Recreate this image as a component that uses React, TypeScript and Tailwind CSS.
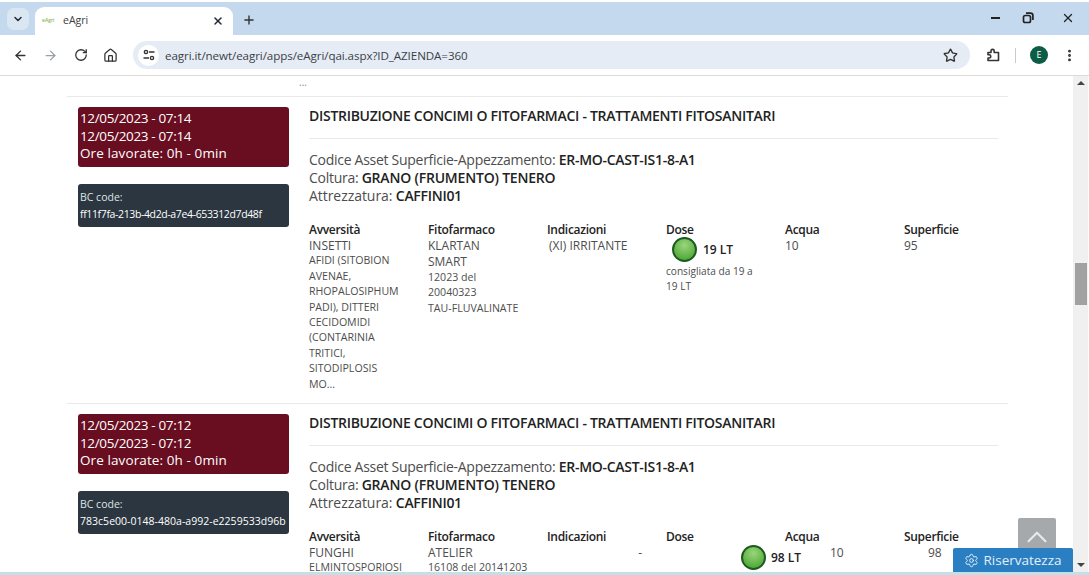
import { ArrowLeft, ArrowRight, ChevronDown, ChevronUp, Home, MoreVertical, Plus, RotateCw, Settings, Star, X } from 'lucide-react';

const font = { fontFamily: '"Open Sans", "Noto Sans", sans-serif' };

function GreenDot() {
  return (
    <span className="inline-block h-[25px] w-[25px] shrink-0 rounded-full border-2 border-[#1c5a20] bg-[radial-gradient(circle_at_50%_30%,#9ad67c,#55ab3c_75%)]" />
  );
}

function Head({ children }: { children: React.ReactNode }) {
  return <div className="text-[12px] leading-[15px] font-semibold tracking-[-0.3px] text-[#222]">{children}</div>;
}

function Record({ stamp, bc, bcClass, children }: { stamp: string; bc: string; bcClass: string; children: React.ReactNode }) {
  return (
    <div className="flex border-b border-[#e8eaea]">
      <div className="w-[242px] shrink-0 pl-[11px] pt-[10px]">
        <div className="h-[60px] w-[211px] rounded-[3px] bg-[#690d20] px-[2px] pt-[3px] text-[13.5px] leading-[17.5px] text-white">
          <div className="tracking-[-0.35px]">{stamp}</div>
          <div className="tracking-[-0.35px]">{stamp}</div>
          <div className="tracking-[0.1px]">Ore lavorate: 0h - 0min</div>
        </div>
        <div className="mt-[17px] h-[43px] w-[211px] rounded-[3px] bg-[#2b3640] px-[2px] pt-[5px] text-[10.5px] leading-[17px] text-white">
          <div className="text-[#dfe3e6]">BC code:</div>
          <div className={bcClass}>{bc}</div>
        </div>
      </div>
      <div className="w-[689px] pt-[10px]">
        <div className="border-b border-[#e9e9e9] pb-[13px] text-[14px] leading-[18px] font-semibold tracking-[-0.28px] text-[#222]">
          DISTRIBUZIONE CONCIMI O FITOFARMACI - TRATTAMENTI FITOSANITARI
        </div>
        <div className="mt-[12px] text-[14px] leading-[18px] tracking-[-0.28px] text-[#4d4d4d]">
          <div>Codice Asset Superficie-Appezzamento: <b className="font-semibold text-[#222]">ER-MO-CAST-IS1-8-A1</b></div>
          <div>Coltura: <b className="font-semibold tracking-[-0.2px] text-[#222]">GRANO (FRUMENTO) TENERO</b></div>
          <div><span className="tracking-[-0.05px]">Attrezzatura:</span> <b className="font-semibold text-[#222]">CAFFINI01</b></div>
        </div>
        {children}
      </div>
    </div>
  );
}

export default function App() {
  return (
    <div style={font} className="relative h-[575px] w-[1089px] overflow-hidden bg-white">
      {/* tab strip */}
      <div className="mt-[2px] flex h-[33px] items-end bg-[#c5d9ee]">
        <div className="mb-[5px] ml-[7px] flex h-[22px] w-[22px] items-center justify-center rounded-[7px] bg-[#dbe6f3]">
          <ChevronDown size={12} strokeWidth={3} className="text-[#1f2937]" />
        </div>
        <div className="ml-[6px] flex h-[28px] w-[198px] items-center rounded-t-[9px] bg-white pl-[7px] pr-[9px]">
          <span className="w-[21px] text-[5px] font-semibold text-[#8ab85a]">eAgri</span>
          <span className="text-[10.5px] text-[#3c4043]">eAgri</span>
          <X size={12} strokeWidth={3} className="ml-auto text-[#1f2937]" />
        </div>
        <Plus size={14} strokeWidth={2.4} className="mb-[8px] ml-[9px] text-[#333]" />
        <div className="mb-[10px] ml-auto mr-[14px] flex items-center text-[#222]">
          <div className="h-[2px] w-[9px] bg-[#222]" />
          <svg width="12" height="12" viewBox="0 0 12 12" fill="none" stroke="#222" strokeWidth="1.7" className="ml-[22px]">
            <rect x="1.5" y="3.5" width="7" height="7" rx="1.8" />
            <path d="M4 1.2h4.5a2.4 2.4 0 0 1 2.4 2.4V8" />
          </svg>
          <X size={14} strokeWidth={2.2} className="ml-[27px]" />
        </div>
      </div>

      {/* toolbar */}
      <div className="flex h-[41px] items-center border-b border-[#dedbd5] pl-[13px]">
        <ArrowLeft size={15} strokeWidth={2.2} className="text-[#333]" />
        <ArrowRight size={15} strokeWidth={2} className="ml-[15px] text-[#9aa0a6]" />
        <RotateCw size={14} strokeWidth={2.2} className="ml-[16px] text-[#333]" />
        <Home size={15} strokeWidth={2} className="ml-[15px] text-[#333]" />
        <div className="ml-[15px] flex h-[28px] w-[837px] items-center rounded-full bg-[#e6ecf5] pl-[5px] pr-[12px]">
          <div className="flex h-[21px] w-[21px] items-center justify-center rounded-full bg-white">
            <svg width="12" height="12" viewBox="0 0 12 12" fill="none" stroke="#333" strokeWidth="1.4">
              <circle cx="3" cy="3" r="1.6" />
              <path d="M6 3h5.5M.5 9H6" />
              <circle cx="9" cy="9" r="1.6" />
            </svg>
          </div>
          <span className="ml-[6px] pt-px text-[11.6px] tracking-[-0.08px] text-[#3a3f45]">eagri.it/newt/eagri/apps/eAgri/qai.aspx?ID_AZIENDA=360</span>
          <Star size={15} strokeWidth={2.2} className="ml-auto text-[#333]" />
        </div>
        <svg width="15" height="15" viewBox="0 0 15 15" fill="none" stroke="#333" strokeWidth="1.6" strokeLinejoin="round" className="ml-[16px]">
          <path d="M2 4.5h3V3a1.6 1.6 0 0 1 3.2 0v1.5h4.3v8H2V10h1.2a1.6 1.6 0 0 0 0-3.2H2z" />
        </svg>
        <div className="ml-[14px] h-[15px] w-px bg-[#c8ccd0]" />
        <div className="ml-[14px] flex h-[18px] w-[18px] items-center justify-center rounded-full bg-[#0d5c45] text-[9px] text-white">E</div>
        <MoreVertical size={15} strokeWidth={2.6} className="ml-[14px] text-[#333]" />
      </div>

      {/* page */}
      <div className="flex h-[496px]">
        <div className="relative w-[1073px] overflow-hidden">
          <div className="ml-[67px] w-[941px]">
            <div className="h-[21px] border-b border-[#e8eaea] pl-[232px] pt-[2px] text-[10px] leading-[8px] text-[#888]">...</div>
            <Record stamp="12/05/2023 - 07:14" bc="ff11f7fa-213b-4d2d-a7e4-653312d7d48f" bcClass="tracking-[-0.37px]">
              <div className="mt-[17px] grid h-[181px] grid-cols-[119px_119px_119px_119px_119px_1fr] text-[#4d4d4d]">
                <div>
                  <Head>Avversità</Head>
                  <div className="mt-px text-[12px] leading-[15.4px]">INSETTI</div>
                  <div className="text-[10.6px] leading-[15.4px]">
                    AFIDI (SITOBION<br />AVENAE,<br />RHOPALOSIPHUM<br />PADI), DITTERI<br />CECIDOMIDI<br />(CONTARINIA<br />TRITICI,<br />SITODIPLOSIS<br />MO...
                  </div>
                </div>
                <div>
                  <Head>Fitofarmaco</Head>
                  <div className="mt-px text-[12px] leading-[16px]">KLARTAN<br />SMART</div>
                  <div className="text-[10.6px] leading-[15.4px]">12023 del<br />20040323<br />TAU-FLUVALINATE</div>
                </div>
                <div>
                  <Head>Indicazioni</Head>
                  <div className="mt-px pl-[2px] text-[12px] leading-[15.4px]">(XI) IRRITANTE</div>
                </div>
                <div>
                  <Head>Dose</Head>
                  <div className="flex h-[25px] items-center pl-[6px]">
                    <GreenDot />
                    <span className="ml-[6px] text-[12px] font-semibold text-[#222]">19 LT</span>
                  </div>
                  <div className="mt-[2px] w-[90px] text-[10.1px] leading-[15.4px]">consigliata da 19 a 19 LT</div>
                </div>
                <div>
                  <Head>Acqua</Head>
                  <div className="mt-px text-[12px] leading-[15.4px]">10</div>
                </div>
                <div>
                  <Head>Superficie</Head>
                  <div className="mt-px text-[12px] leading-[15.4px]">95</div>
                </div>
              </div>
            </Record>
            <Record stamp="12/05/2023 - 07:12" bc="783c5e00-0148-480a-a992-e2259533d96b" bcClass="tracking-[0.02px]">
              <div className="mt-[17px] grid grid-cols-[119px_119px_119px_119px_119px_1fr] text-[#4d4d4d]">
                <Head>Avversità</Head>
                <Head>Fitofarmaco</Head>
                <Head>Indicazioni</Head>
                <Head>Dose</Head>
                <Head>Acqua</Head>
                <Head>Superficie</Head>
              </div>
              <div className="mt-px flex text-[#4d4d4d]">
                <div className="w-[119px] shrink-0">
                  <div className="text-[12px] leading-[15.4px]">FUNGHI</div>
                  <div className="text-[10.6px] leading-[15.4px]">ELMINTOSPORIOSI</div>
                </div>
                <div className="w-[119px] shrink-0">
                  <div className="text-[12px] leading-[15.4px]">ATELIER</div>
                  <div className="text-[10.6px] leading-[15.4px]">16108 del 20141203</div>
                </div>
                <div className="w-[95px] shrink-0 text-right text-[12px] leading-[15.4px]">-</div>
                <div className="ml-[99px] flex h-[25px] w-[89px] shrink-0 items-center">
                  <GreenDot />
                  <span className="ml-[5px] text-[12px] font-semibold text-[#222]">98 LT</span>
                </div>
                <div className="w-[98px] shrink-0 text-[12px] leading-[15.4px]">10</div>
                <div className="text-[12px] leading-[15.4px]">98</div>
              </div>
            </Record>
          </div>

          <div className="absolute left-[1018px] top-[442px] flex h-[38px] w-[38px] items-center justify-center rounded-[2px] bg-[#a6a9ab]">
            <ChevronUp size={34} strokeWidth={1.5} className="text-[#e8e9ea]" />
          </div>
          <div className="absolute left-[953px] top-[472px] flex h-[24px] w-[120px] items-center justify-center gap-[4px] rounded-t-[2px] bg-[#2a7ec2] text-[13.5px] text-[#e4eef7]">
            <Settings size={15} strokeWidth={1.6} />
            Riservatezza
          </div>
        </div>

        {/* scrollbar */}
        <div className="flex w-[15px] flex-col items-center bg-[#f0f0f0]">
          <div className="mt-[5px] h-0 w-0 border-x-[4px] border-b-[4px] border-x-transparent border-b-[#444]" />
          <div className="mt-[178px] h-[42px] w-[12px] bg-[#a1a1a1]" />
          <div className="mt-auto mb-[5px] h-0 w-0 border-x-[4px] border-t-[4px] border-x-transparent border-t-[#444]" />
        </div>
      </div>
      <div className="h-[3px] bg-[#c4e0e6]" />
    </div>
  );
}
